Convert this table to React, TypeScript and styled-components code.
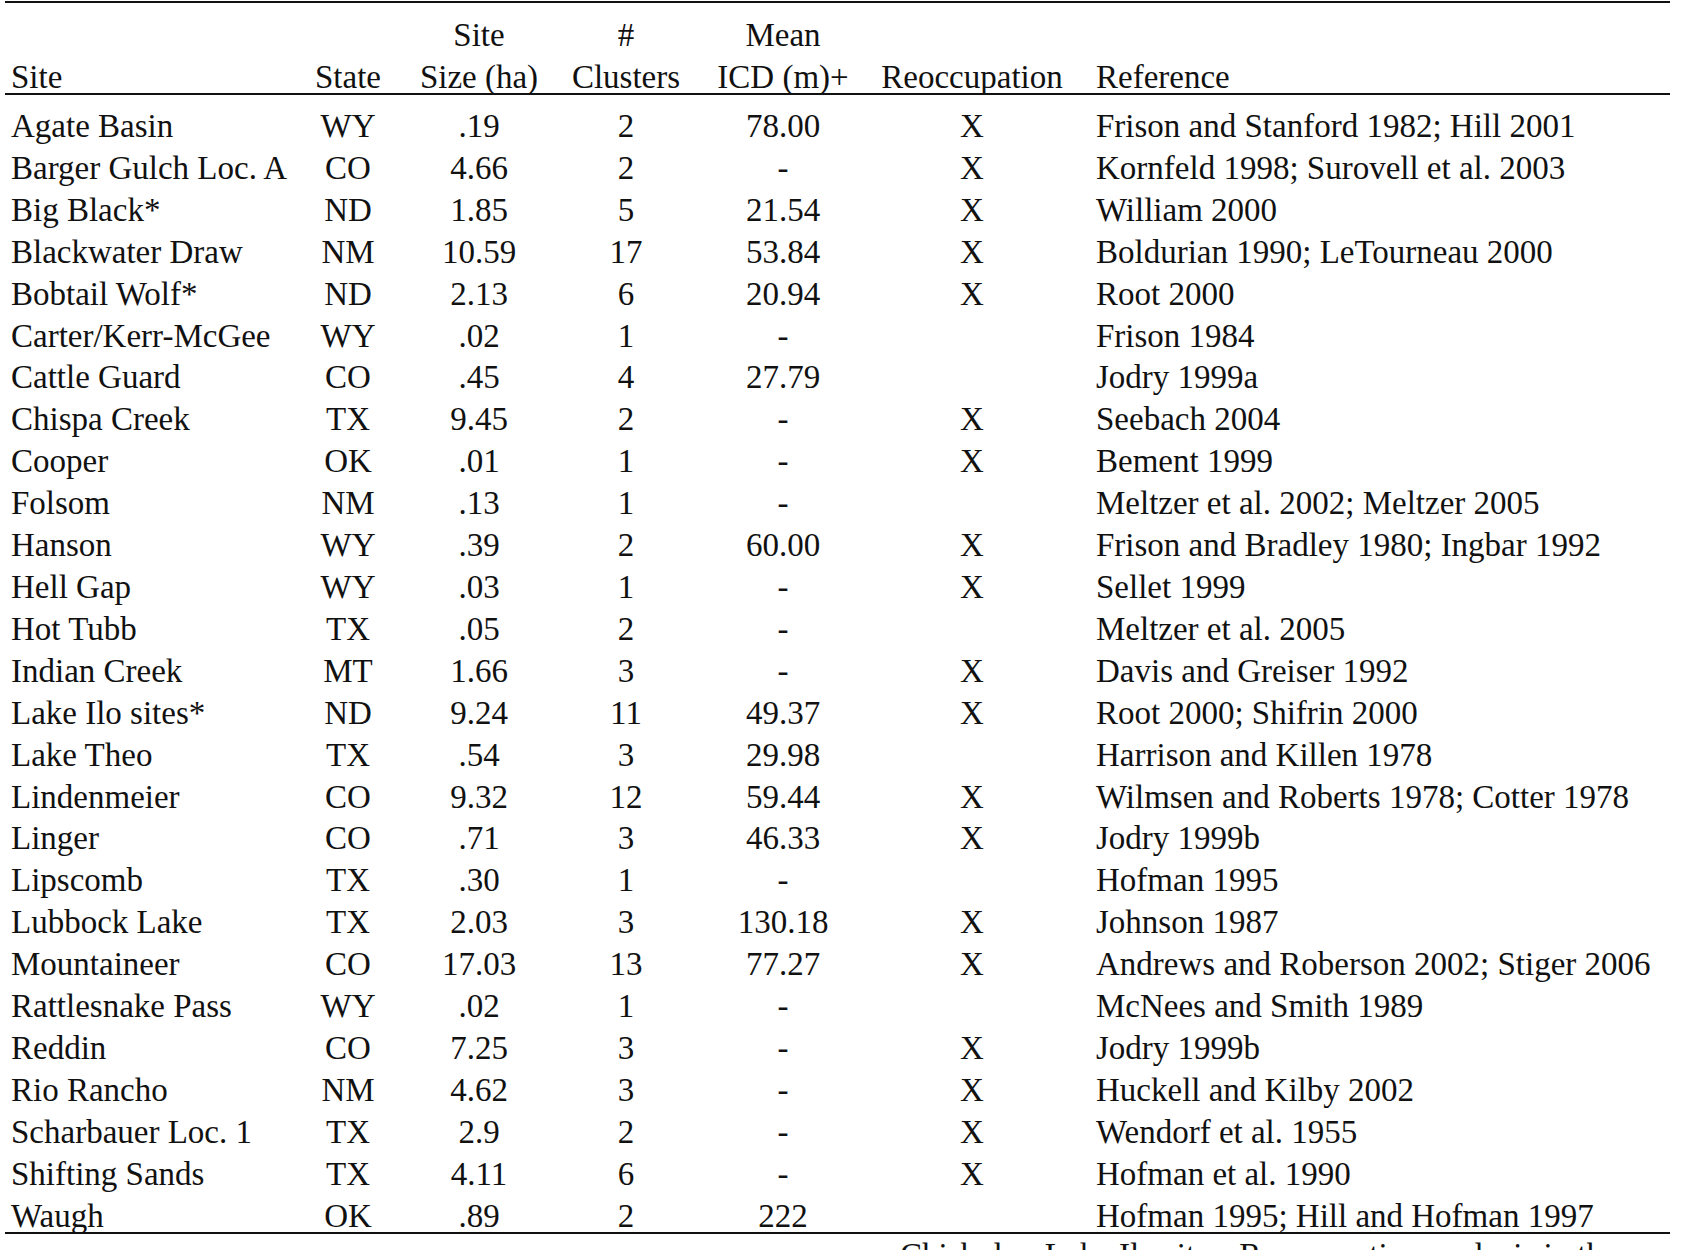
import styled, { createGlobalStyle } from 'styled-components';

const GlobalStyle = createGlobalStyle`
    html, body {
        margin: 0;
        padding: 0;
        background: #ffffff;
        overflow: hidden;
    }
    body {
        width: 1690px;
        height: 1250px;
        font-family: 'Liberation Serif', 'Times New Roman', serif;
        color: #111111;
    }
`;

const cols = '295px 96px 166px 128px 186px 192px 1fr';

const Page = styled.div`
    width: 1665px;
    height: 1250px;
    margin-left: 5px;
    padding-top: 1px;
    overflow: hidden;
    font-size: 33px;
`;

const Header = styled.div`
    display: grid;
    grid-template-columns: ${cols};
    border-top: 2px solid #111111;
    border-bottom: 2px solid #111111;
    padding-top: 11px;
    line-height: 42px;
`;

const HeadCell = styled.div<{ $align?: 'left' | 'center'; $pad?: number }>`
    display: flex;
    flex-direction: column;
    justify-content: flex-end;
    align-items: ${p => (p.$align === 'left' ? 'flex-start' : 'center')};
    padding-left: ${p => p.$pad ?? 0}px;
    white-space: nowrap;
    height: 84px;
    margin-bottom: -5px;
`;

const Body = styled.div`
    padding-top: 11px;
    border-bottom: 2px solid #111111;
`;

const Row = styled.div`
    display: grid;
    grid-template-columns: ${cols};
    height: 41.92px;
    line-height: 41.92px;

    &:last-child {
        height: 36px;
    }
`;

const Cell = styled.div<{ $align?: 'left' | 'center'; $pad?: number }>`
    text-align: ${p => p.$align ?? 'center'};
    padding-left: ${p => p.$pad ?? 0}px;
    white-space: nowrap;
`;

const Note = styled.div`
    padding-top: 1px;
    padding-left: 895px;
    line-height: 40px;
    white-space: nowrap;
`;

type Site = [string, string, string, string, string, boolean, string];

const sites: Site[] = [
    ['Agate Basin', 'WY', '.19', '2', '78.00', true, 'Frison and Stanford 1982; Hill 2001'],
    ['Barger Gulch Loc. A', 'CO', '4.66', '2', '-', true, 'Kornfeld 1998; Surovell et al. 2003'],
    ['Big Black*', 'ND', '1.85', '5', '21.54', true, 'William 2000'],
    ['Blackwater Draw', 'NM', '10.59', '17', '53.84', true, 'Boldurian 1990; LeTourneau 2000'],
    ['Bobtail Wolf*', 'ND', '2.13', '6', '20.94', true, 'Root 2000'],
    ['Carter/Kerr-McGee', 'WY', '.02', '1', '-', false, 'Frison 1984'],
    ['Cattle Guard', 'CO', '.45', '4', '27.79', false, 'Jodry 1999a'],
    ['Chispa Creek', 'TX', '9.45', '2', '-', true, 'Seebach 2004'],
    ['Cooper', 'OK', '.01', '1', '-', true, 'Bement 1999'],
    ['Folsom', 'NM', '.13', '1', '-', false, 'Meltzer et al. 2002; Meltzer 2005'],
    ['Hanson', 'WY', '.39', '2', '60.00', true, 'Frison and Bradley 1980; Ingbar 1992'],
    ['Hell Gap', 'WY', '.03', '1', '-', true, 'Sellet 1999'],
    ['Hot Tubb', 'TX', '.05', '2', '-', false, 'Meltzer et al. 2005'],
    ['Indian Creek', 'MT', '1.66', '3', '-', true, 'Davis and Greiser 1992'],
    ['Lake Ilo sites*', 'ND', '9.24', '11', '49.37', true, 'Root 2000; Shifrin 2000'],
    ['Lake Theo', 'TX', '.54', '3', '29.98', false, 'Harrison and Killen 1978'],
    ['Lindenmeier', 'CO', '9.32', '12', '59.44', true, 'Wilmsen and Roberts 1978; Cotter 1978'],
    ['Linger', 'CO', '.71', '3', '46.33', true, 'Jodry 1999b'],
    ['Lipscomb', 'TX', '.30', '1', '-', false, 'Hofman 1995'],
    ['Lubbock Lake', 'TX', '2.03', '3', '130.18', true, 'Johnson 1987'],
    ['Mountaineer', 'CO', '17.03', '13', '77.27', true, 'Andrews and Roberson 2002; Stiger 2006'],
    ['Rattlesnake Pass', 'WY', '.02', '1', '-', false, 'McNees and Smith 1989'],
    ['Reddin', 'CO', '7.25', '3', '-', true, 'Jodry 1999b'],
    ['Rio Rancho', 'NM', '4.62', '3', '-', true, 'Huckell and Kilby 2002'],
    ['Scharbauer Loc. 1', 'TX', '2.9', '2', '-', true, 'Wendorf et al. 1955'],
    ['Shifting Sands', 'TX', '4.11', '6', '-', true, 'Hofman et al. 1990'],
    ['Waugh', 'OK', '.89', '2', '222', false, 'Hofman 1995; Hill and Hofman 1997'],
];

export default function App() {
    return (
        <>
            <GlobalStyle />
            <Page>
                <Header>
                    <HeadCell $align="left" $pad={6}><span>Site</span></HeadCell>
                    <HeadCell><span>State</span></HeadCell>
                    <HeadCell><span>Site</span><span>Size (ha)</span></HeadCell>
                    <HeadCell><span>#</span><span>Clusters</span></HeadCell>
                    <HeadCell><span>Mean</span><span>ICD (m)+</span></HeadCell>
                    <HeadCell><span>Reoccupation</span></HeadCell>
                    <HeadCell $align="left" $pad={28}><span>Reference</span></HeadCell>
                </Header>
                <Body>
                    {sites.map(([name, state, size, clusters, icd, reocc, ref]) => (
                        <Row key={name}>
                            <Cell $align="left" $pad={6}>{name}</Cell>
                            <Cell>{state}</Cell>
                            <Cell>{size}</Cell>
                            <Cell>{clusters}</Cell>
                            <Cell>{icd}</Cell>
                            <Cell>{reocc ? 'X' : ''}</Cell>
                            <Cell $align="left" $pad={28}>{ref}</Cell>
                        </Row>
                    ))}
                </Body>
                <Note>Chisholm, Lake Ilo sites, Reoccupation analysis in the</Note>
            </Page>
        </>
    );
}
